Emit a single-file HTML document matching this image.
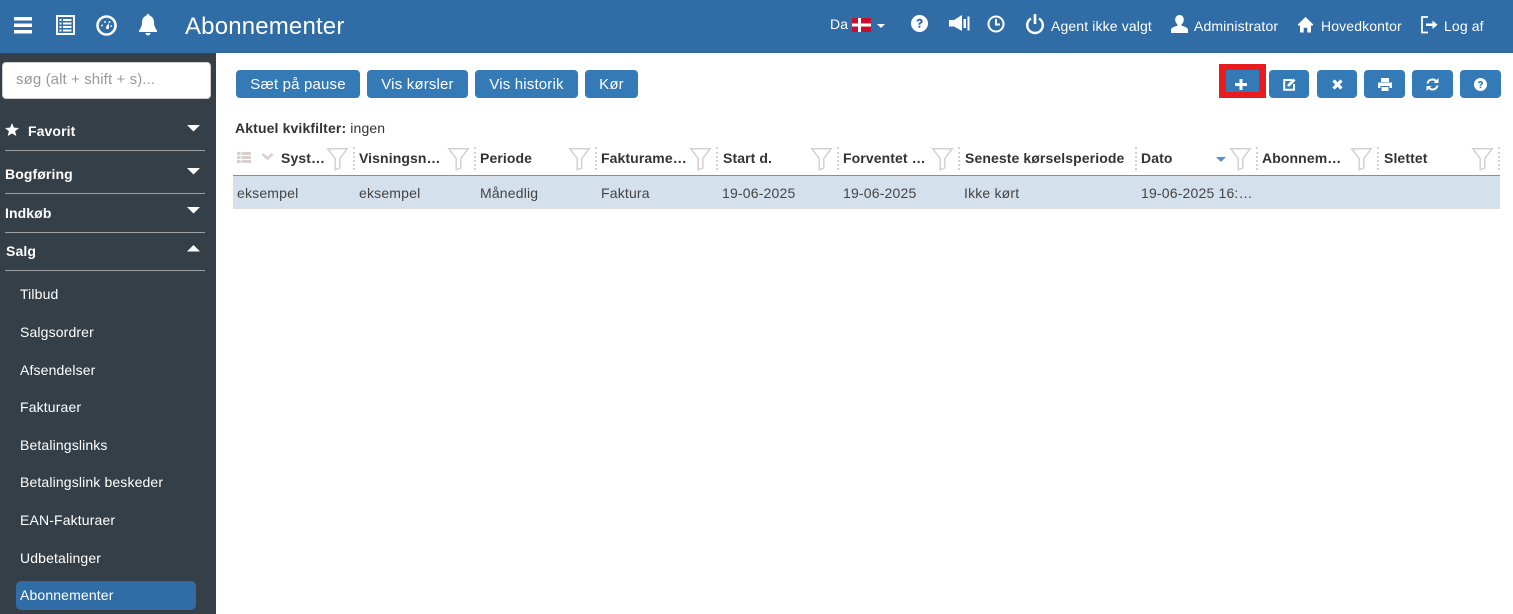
<!DOCTYPE html>
<html lang="da"><head><meta charset="utf-8"><title>Abonnementer</title>
<style>
html,body{margin:0;padding:0;width:1513px;height:614px;overflow:hidden;background:#fff;font-family:"Liberation Sans",sans-serif;font-size:14px;color:#333;letter-spacing:.13px}
.a{position:absolute}
.t{position:absolute;line-height:20px;white-space:nowrap}
svg{position:absolute;overflow:visible}
.w{color:#fff}
.b{position:absolute;top:70px;height:28px;background:#337ab7;border-radius:4px;color:#fff;text-align:center;line-height:29px;font-size:15px;letter-spacing:.17px}
.m{font-weight:bold;color:#fff;font-size:14px;letter-spacing:.1px}
.s{color:#fff;font-size:14px;left:20px;letter-spacing:.14px}
.hr{position:absolute;left:5px;width:200px;height:1px;background:#9a9fa3}
.h{font-weight:bold;color:#333;font-size:14px;letter-spacing:.1px;top:148px}
.c{top:183px;color:#444;letter-spacing:.18px}
.d{position:absolute;top:147px;height:23px;border-left:2px dotted #d8d0d0;width:0}
</style></head><body>
<div class="a" style="left:0;top:0;width:1513px;height:53px;background:#306ca6"></div>
<div class="a" style="left:0;top:53px;width:216px;height:561px;background:#353f47"></div>

<svg style="left:14px;top:17px" width="18" height="18"><path d="M0 0h18v3.500H0zM0 6.500h18v3.500H0zM0 13h18v3.500H0z" fill="#fff"/></svg>
<svg style="left:56px;top:15px" width="19" height="20"><path d="M0 0h19v20H0z" fill="#fff"/><path d="M2 2h15v16H2z" fill="#306ca6"/><path d="M3.500 4h2v2h-2zM7 4h8.500v2H7zM3.500 7.500h2v2h-2zM7 7.500h8.500v2H7zM3.500 11h2v2h-2zM7 11h8.500v2H7zM3.500 14.500h2v2h-2zM7 14.500h8.500v2H7z" fill="#fff"/></svg>
<svg style="left:96px;top:15px" width="21" height="21"><circle cx="10.500" cy="10.500" r="9" fill="none" stroke="#fff" stroke-width="2.600"/><path d="M5 10l1.500-.6.600 1.500-1.500.6zM8 6.500l1.500-.6.600 1.500-1.500.6zM13 6l1.500.6-.6 1.500-1.500-.6zM15.500 10l.8 1.400-1.400.7-.8-1.400zM10 12l2.500-4 .6 4.500a1.600 1.600 0 1 1-3.100-.5z" fill="#fff"/></svg>
<svg style="left:139px;top:14px" width="18" height="22"><path d="M9 0c1 0 1.600.7 1.600 1.700C13.500 2.500 15 5 15 8c0 3.500 1 6 3 8.500V18H0v-1.500C2 14 3 11.500 3 8c0-3 1.500-5.500 4.400-6.300C7.400.7 8 0 9 0z" fill="#fff"/><path d="M6.500 19h5a2.500 2.500 0 0 1-5 0z" fill="#fff"/></svg>
<div class="t w" style="left:185px;top:14px;font-size:24px;line-height:26px;letter-spacing:.17px">Abonnementer</div>

<div class="t w" style="left:830px;top:14px;font-size:14px">Da</div>
<svg style="left:852px;top:18px" width="19" height="14"><path d="M0 0h19v14H0z" fill="#c8102e"/><path d="M6 0h3v14H6zM0 5.500h19v3H0z" fill="#fff"/></svg>
<svg style="left:877px;top:24px" width="8" height="4"><path d="M0 0h8L4 4z" fill="#fff"/></svg>
<svg style="left:911px;top:15px" width="17" height="17"><circle cx="8.500" cy="8.500" r="8.500" fill="#fff"/><path d="M5.500 6.200C5.700 4.500 7 3.700 8.700 3.700c1.800 0 3 1 3 2.500 0 1.200-.7 1.800-1.500 2.300-.6.400-.8.700-.8 1.300H7.400c0-1.200.4-1.800 1.200-2.300.6-.4 1-.7 1-1.200 0-.5-.4-.8-1-.8-.7 0-1.100.4-1.200 1zM7.400 10.800h2v2h-2z" fill="#306ca6"/></svg>
<svg style="left:949px;top:15px" width="21" height="17"><path d="M0 5h5l8-5v16l-8-4.500H0z" fill="#fff"/><path d="M14.500 4h2.500v9h-2.500zM18.500 1.500h2v14h-2z" fill="#fff"/></svg>
<svg style="left:987px;top:15px" width="18" height="18"><circle cx="9" cy="9" r="7.500" fill="none" stroke="#fff" stroke-width="2"/><path d="M8 4h2v6H8zM8 8.500h5v2H8z" fill="#fff"/></svg>
<svg style="left:1026px;top:14px" width="18" height="20"><path d="M5 4.500a7.800 7.800 0 1 0 8 0" fill="none" stroke="#fff" stroke-width="2.400"/><path d="M7.700 0h2.600v10H7.700z" fill="#fff"/></svg>
<div class="t w" style="left:1051px;top:16px">Agent ikke valgt</div>
<svg style="left:1171px;top:15px" width="17" height="18"><path d="M8.500 0c2.700 0 4.300 2 4.300 4.700 0 2-1 3.800-2.300 4.700v1.400c3 .8 6.500 1.700 6.500 4.200v3H0v-3c0-2.500 3.500-3.400 6.500-4.200V9.400C5.200 8.500 4.200 6.700 4.200 4.700 4.200 2 5.800 0 8.500 0z" fill="#fff"/></svg>
<div class="t w" style="left:1194px;top:16px">Administrator</div>
<svg style="left:1298px;top:17px" width="15" height="16"><path d="M7.500 0L15 7.300v1.200h-2V15.500H9.300v-4.700H5.700v4.700H2V8.500H0V7.300z" fill="#fff"/></svg>
<div class="t w" style="left:1321px;top:16px">Hovedkontor</div>
<svg style="left:1421px;top:16px" width="17" height="18"><path d="M7 1H1v15.500h6" fill="none" stroke="#fff" stroke-width="1.800"/><path d="M5 7.500h6.500V4.500L16.500 8.800l-5 4.200v-3H5z" fill="#fff"/></svg>
<div class="t w" style="left:1444px;top:16px">Log af</div>

<div class="a" style="left:2px;top:62px;width:207px;height:35px;background:#fff;border:1px solid #ccc;border-radius:4px"></div>
<div class="t" style="left:16px;top:70px;color:#999;font-size:15px;letter-spacing:.1px">søg (alt + shift + s)...</div>

<svg style="left:5px;top:123px" width="14" height="13"><path d="M7 0l1.900 4.600 5.100.4-3.900 3.200 1.200 4.800L7 10.400 2.700 13l1.200-4.800L0 5l5.100-.4z" fill="#fff"/></svg>
<div class="t m" style="left:28px;top:121px">Favorit</div>
<svg style="left:187px;top:125px" width="13" height="7"><path d="M0 0h13L6.500 6.500z" fill="#fff"/></svg>
<div class="hr" style="top:150px"></div>
<div class="t m" style="left:5px;top:164px">Bogføring</div>
<svg style="left:187px;top:168px" width="13" height="7"><path d="M0 0h13L6.500 6.500z" fill="#fff"/></svg>
<div class="hr" style="top:193px"></div>
<div class="t m" style="left:5px;top:203px">Indkøb</div>
<svg style="left:187px;top:207px" width="13" height="7"><path d="M0 0h13L6.500 6.500z" fill="#fff"/></svg>
<div class="hr" style="top:232px"></div>
<div class="t m" style="left:6px;top:241px">Salg</div>
<svg style="left:187px;top:245px" width="13" height="7"><path d="M0 6.500h13L6.500 0z" fill="#fff"/></svg>
<div class="hr" style="top:270px"></div>
<div class="t s" style="top:284px">Tilbud</div>
<div class="t s" style="top:322px">Salgsordrer</div>
<div class="t s" style="top:360px">Afsendelser</div>
<div class="t s" style="top:397px">Fakturaer</div>
<div class="t s" style="top:435px">Betalingslinks</div>
<div class="t s" style="top:472px">Betalingslink beskeder</div>
<div class="t s" style="top:510px">EAN-Fakturaer</div>
<div class="t s" style="top:548px">Udbetalinger</div>
<div class="a" style="left:16px;top:581px;width:180px;height:29px;background:#306ca6;border-radius:5px"></div>
<div class="t s" style="top:585px">Abonnementer</div>

<div class="b" style="left:236px;width:124px">Sæt på pause</div>
<div class="b" style="left:367px;width:101px">Vis kørsler</div>
<div class="b" style="left:475px;width:103px">Vis historik</div>
<div class="b" style="left:585px;width:53px">Kør</div>

<div class="a" style="left:1219px;top:64px;width:47px;height:34px;background:#e81c1f"></div>
<div class="a" style="left:1226px;top:70px;width:33px;height:22px;background:#337ab7"></div>
<svg style="left:1235px;top:79px" width="12" height="11"><path d="M4.500 0h3v4H12v3H7.500v4h-3V7H0V4h4.500z" fill="#fff"/></svg>
<div class="b" style="left:1269px;width:40px"></div>
<svg style="left:1283px;top:78px" width="13" height="13"><path d="M9 2H1.200v9.800H11V6" fill="none" stroke="#fff" stroke-width="2"/><path d="M4.500 6.500L10.500 0.500l2 2L6.500 8.500H4.500z" fill="#fff"/></svg>
<div class="b" style="left:1317px;width:40px"></div>
<svg style="left:1332px;top:79px" width="11" height="11"><path d="M1.500 1.500l8 8M9.500 1.500l-8 8" stroke="#fff" stroke-width="3.200"/></svg>
<div class="b" style="left:1364px;width:41px"></div>
<svg style="left:1378px;top:78px" width="14" height="13"><path d="M3 0h8v4H3zM0 4.500h14V10h-2.500V8h-9v2H0zM3.500 9h7v4h-7z" fill="#fff"/></svg>
<div class="b" style="left:1412px;width:41px"></div>
<svg style="left:1426px;top:78px" width="13" height="13"><path d="M1.500 5.500C2 3 4 1.500 6.500 1.500c1.500 0 2.700.6 3.500 1.500M11.500 7.500C11 10 9 11.500 6.500 11.500 5 11.500 3.800 10.900 3 10" fill="none" stroke="#fff" stroke-width="2"/><path d="M12.500 0v5h-5zM.5 13V8h5z" fill="#fff"/></svg>
<div class="b" style="left:1460px;width:41px"></div>
<svg style="left:1474px;top:78px" width="13" height="13"><circle cx="6.500" cy="6.500" r="6.500" fill="#fff"/><path d="M4 5c.2-1.300 1.200-2 2.500-2 1.400 0 2.500.8 2.500 2 0 .9-.5 1.400-1.200 1.800-.5.300-.6.500-.6 1H5.700c0-.9.300-1.400.9-1.800.5-.3.800-.5.800-.9 0-.3-.3-.6-.8-.6s-.9.300-1 .7zM5.700 8.500h1.600V10H5.700z" fill="#337ab7"/></svg>

<div class="t" style="left:235px;top:118px;color:#333"><b>Aktuel kvikfilter:</b> ingen</div>

<svg style="left:237px;top:152px" width="14" height="11"><path d="M0 0h3.500v3H0zM4.500 0H14v3H4.500zM0 4h3.500v3H0zM4.500 4H14v3H4.500zM0 8h3.500v3H0zM4.500 8H14v3H4.500z" fill="#d8d0d0"/></svg>
<svg style="left:261px;top:153px" width="13" height="8"><path d="M1.500 1l5 4.500 5-4.500" fill="none" stroke="#d8d0d0" stroke-width="2.600"/></svg>

<div class="t h" style="left:281px">Syst…</div>
<div class="t h" style="left:359px">Visningsn…</div>
<div class="t h" style="left:480px">Periode</div>
<div class="t h" style="left:601px">Fakturame…</div>
<div class="t h" style="left:723px">Start d.</div>
<div class="t h" style="left:843px">Forventet …</div>
<div class="t h" style="left:965px">Seneste kørselsperiode</div>
<div class="t h" style="left:1141px">Dato</div>
<div class="t h" style="left:1262px">Abonnem…</div>
<div class="t h" style="left:1384px">Slettet</div>
<svg style="left:1216px;top:157px" width="10" height="5"><path d="M0 0h10L5 5z" fill="#5b8fd0"/></svg>

<svg width="0" height="0" style="left:0;top:0"><defs><g id="f"><path d="M.8.800h19.400L12.800 10.500v9.500l-4.600 1.800V10.500z" fill="none" stroke="#d8d0d0" stroke-width="1.500"/></g></defs></svg>
<svg style="left:327px;top:148px" width="21" height="22"><use href="#f"/></svg>
<svg style="left:448px;top:148px" width="21" height="22"><use href="#f"/></svg>
<svg style="left:569px;top:148px" width="21" height="22"><use href="#f"/></svg>
<svg style="left:690px;top:148px" width="21" height="22"><use href="#f"/></svg>
<svg style="left:811px;top:148px" width="21" height="22"><use href="#f"/></svg>
<svg style="left:932px;top:148px" width="21" height="22"><use href="#f"/></svg>
<svg style="left:1230px;top:148px" width="21" height="22"><use href="#f"/></svg>
<svg style="left:1351px;top:148px" width="21" height="22"><use href="#f"/></svg>
<svg style="left:1472px;top:148px" width="21" height="22"><use href="#f"/></svg>

<div class="d" style="left:353px"></div><div class="d" style="left:474px"></div><div class="d" style="left:595px"></div><div class="d" style="left:716px"></div><div class="d" style="left:837px"></div><div class="d" style="left:958px"></div><div class="d" style="left:1135px"></div><div class="d" style="left:1256px"></div><div class="d" style="left:1377px"></div><div class="d" style="left:1498px"></div>

<div class="a" style="left:233px;top:175px;width:1267px;height:1px;background:#8a8f94"></div>
<div class="a" style="left:233px;top:176px;width:1267px;height:32px;background:#d4e0ec"></div>
<div class="a" style="left:233px;top:208px;width:1267px;height:1px;background:#ddd"></div>
<div class="t c" style="left:237px">eksempel</div>
<div class="t c" style="left:359px">eksempel</div>
<div class="t c" style="left:480px">Månedlig</div>
<div class="t c" style="left:601px">Faktura</div>
<div class="t c" style="left:722px">19-06-2025</div>
<div class="t c" style="left:843px">19-06-2025</div>
<div class="t c" style="left:964px">Ikke kørt</div>
<div class="t c" style="left:1141px">19-06-2025 16:…</div>
</body></html>
